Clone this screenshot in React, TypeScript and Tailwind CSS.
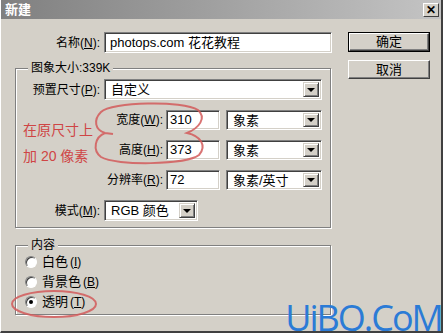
import React from "react";

const Sunken = ({ className = "", children }: { className?: string; children?: React.ReactNode }) => (
  <div
    className={`bg-white border border-t-[#808080] border-l-[#808080] border-b-white border-r-white shadow-[inset_1px_1px_0_#404040,inset_-1px_-1px_0_#d4d0c8] ${className}`}
  >
    {children}
  </div>
);

const Arrow = () => (
  <div className="ml-auto w-[16px] h-full bg-[#d4d0c8] border border-t-[#d4d0c8] border-l-[#d4d0c8] border-b-[#404040] border-r-[#404040] shadow-[inset_1px_1px_0_white,inset_-1px_-1px_0_#808080] flex items-center justify-center">
    <div className="w-0 h-0 border-l-[4px] border-r-[4px] border-t-[4px] border-l-transparent border-r-transparent border-t-black" />
  </div>
);

const Select = ({ value, className = "" }: { value: string; className?: string }) => (
  <Sunken className={`flex items-center p-[2px] ${className}`}>
    <span className="pl-[4px] text-[13px] leading-none">{value}</span>
    <Arrow />
  </Sunken>
);

const Label = ({ text, k, className = "" }: { text: string; k: string; className?: string }) => (
  <span className={`text-[12px] text-right shrink-0 ${className}`}>
    {text}(<span className="underline">{k}</span>):
  </span>
);

const Radio = ({ text, k, checked }: { text: string; k: string; checked?: boolean }) => (
  <div className="h-[20px] flex items-center">
    <div className="w-[12px] h-[12px] rounded-full bg-white border border-t-[#808080] border-l-[#808080] border-b-white border-r-white shadow-[inset_1px_1px_0_#404040] flex items-center justify-center">
      {checked && <div className="w-[4px] h-[4px] rounded-full bg-black" />}
    </div>
    <span className="ml-[5px] text-[13px]">
      {text}
      <span className="ml-[2px] text-[12px]">
        (<span className="underline">{k}</span>)
      </span>
    </span>
  </div>
);

const Button = ({ text, isDefault }: { text: string; isDefault?: boolean }) => (
  <div className={`w-[82px] ${isDefault ? "h-[20px] border border-black" : "h-[19px]"}`}>
    <div className="h-full bg-[#d4d0c8] border border-t-white border-l-white border-b-[#404040] border-r-[#404040] shadow-[inset_-1px_-1px_0_#808080] flex items-center justify-center text-[13px]">
      {text}
    </div>
  </div>
);

export default function App() {
  return (
    <div className="relative w-[443px] h-[333px] overflow-hidden bg-[#d4d0c8] border-l border-l-white border-r-2 border-r-[#404040] border-b-2 border-b-[#404040] text-black [font-family:'Liberation_Sans','Noto_Sans_CJK_SC',sans-serif]">
      {/* title bar */}
      <div className="h-[19px] flex items-center justify-between bg-gradient-to-r from-[#808080] to-[#c4c4c4]">
        <span className="pl-[4px] text-[13px] font-bold text-white">新建</span>
        <div className="mr-[2px] w-[16px] h-[14px] bg-[#d4d0c8] border border-t-white border-l-white border-b-[#404040] border-r-[#404040] flex items-center justify-center text-[12px] font-bold leading-none">
          ✕
        </div>
      </div>

      <div className="flex">
        {/* left column */}
        <div className="pl-[14px] pt-[13px] w-[332px]">
          <div className="flex items-center">
            <Label text="名称" k="N" className="w-[85px]" />
            <Sunken className="ml-[4px] w-[228px] h-[21px] flex items-center px-[5px] text-[13px]">
              photops.com 花花教程
            </Sunken>
          </div>

          <fieldset className="mt-[8px] w-[316px] border border-[#808080] shadow-[1px_1px_0_white,inset_1px_1px_0_white]">
            <legend className="ml-[12px] px-[3px] bg-[#d4d0c8] text-[12px] leading-[14px]">图象大小:339K</legend>
            <div className="pt-[4px] pb-[6px] flex flex-col gap-[10px]">
              <div className="h-[21px] flex items-center">
                <Label text="预置尺寸" k="P" className="w-[84px]" />
                <Select value="自定义" className="ml-[4px] w-[218px] h-[21px]" />
              </div>
              <div className="h-[20px] flex items-center">
                <Label text="宽度" k="W" className="w-[147px]" />
                <Sunken className="ml-[3px] w-[54px] h-[20px] flex items-center px-[3px] text-[13px]">310</Sunken>
                <Select value="象素" className="ml-[6px] w-[96px] h-[20px]" />
              </div>
              <div className="h-[20px] flex items-center">
                <Label text="高度" k="H" className="w-[147px]" />
                <Sunken className="ml-[3px] w-[54px] h-[20px] flex items-center px-[3px] text-[13px]">373</Sunken>
                <Select value="象素" className="ml-[6px] w-[96px] h-[20px]" />
              </div>
              <div className="h-[20px] flex items-center">
                <Label text="分辨率" k="R" className="w-[147px]" />
                <Sunken className="ml-[3px] w-[54px] h-[20px] flex items-center px-[3px] text-[13px]">72</Sunken>
                <Select value="象素/英寸" className="ml-[6px] w-[96px] h-[20px]" />
              </div>
              <div className="h-[21px] flex items-center">
                <Label text="模式" k="M" className="w-[84px]" />
                <Select value="RGB 颜色" className="ml-[4px] w-[94px] h-[21px]" />
              </div>
            </div>
          </fieldset>

          <fieldset className="mt-[10px] w-[316px] border border-[#808080] shadow-[1px_1px_0_white,inset_1px_1px_0_white]">
            <legend className="ml-[12px] px-[3px] bg-[#d4d0c8] text-[12px] leading-[14px]">内容</legend>
            <div className="pl-[9px] pb-[2px] flex flex-col">
              <Radio text="白色" k="I" />
              <Radio text="背景色" k="B" />
              <Radio text="透明" k="T" checked />
            </div>
          </fieldset>
        </div>

        {/* right column */}
        <div className="ml-[15px] pt-[13px] flex flex-col gap-[8px]">
          <Button text="确定" isDefault />
          <Button text="取消" />
        </div>
      </div>

      {/* red annotations */}
      <div className="absolute left-[22px] top-[117px] text-[14px] leading-[26px] text-[#cf4545] pointer-events-none">
        <div>在原尺寸上</div>
        <div>加 20 像素</div>
      </div>
      <svg className="absolute left-0 top-0 pointer-events-none" width="443" height="333" viewBox="0 0 443 333">
        <path
          d="M112 134 L104 133 C94 130 92 120 100 112 C110 102 182 100 197 110 C206 118 198 128 186 133 C200 136 206 146 198 155 C185 165 115 166 100 157 C91 150 94 137 104 133"
          fill="none"
          stroke="#d25a5a"
          strokeWidth="2"
          strokeOpacity="0.85"
        />
        <ellipse cx="53" cy="304" rx="42" ry="13" fill="none" stroke="#d25a5a" strokeWidth="2" strokeOpacity="0.85" />
      </svg>

      {/* watermark */}
      <div className="absolute right-[-1px] bottom-[-5px] text-[36px] tracking-[-2px] leading-none text-[#2b7bd6] [font-family:'Open_Sans',sans-serif] pointer-events-none">
        UiBQ.CoM
      </div>
    </div>
  );
}
